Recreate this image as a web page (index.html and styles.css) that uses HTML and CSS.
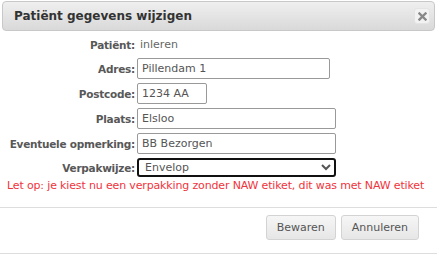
FILE: index.html
```html
<!DOCTYPE html>
<html>
<head>
    <title>Patiënt gegevens wijzigen</title>
    <meta charset="UTF-8">
    <link rel="stylesheet" href="styles.css">
</head>
<body>

    <div class="dialog">
        <div class="titlebar">
            <span class="title">Patiënt gegevens wijzigen</span>
            <button class="close" title="Sluiten">
                <svg width="9" height="9" viewBox="0 0 9 9"><path d="M1.5 1.5 L7.5 7.5 M7.5 1.5 L1.5 7.5" stroke="#888" stroke-width="2.4" stroke-linecap="square"/></svg>
            </button>
        </div>

        <div class="content">
            <div class="form">
                <label>Patiënt:</label>
                <span class="value">inleren</span>

                <label>Adres:</label>
                <input type="text" class="w-long" value="Pillendam 1">

                <label>Postcode:</label>
                <input type="text" class="w-short" value="1234 AA">

                <label>Plaats:</label>
                <input type="text" class="w-full" value="Elsloo">

                <label>Eventuele opmerking:</label>
                <input type="text" class="w-full" value="BB Bezorgen">

                <label>Verpakwijze:</label>
                <select class="w-full">
                    <option>Envelop</option>
                </select>
            </div>
            <p class="warning">Let op: je kiest nu een verpakking zonder NAW etiket, dit was met NAW etiket</p>
        </div>

        <div class="buttonpane">
            <button>Bewaren</button>
            <button>Annuleren</button>
        </div>
    </div>

</body>
</html>
```

FILE: styles.css
```css
body {
    margin: 0;
    background: #fff;
    font-family: "Century Gothic", "DejaVu Sans", sans-serif;
    font-size: 11px;
    color: #555;
}
.dialog {
    width: 437px;
    height: 254px;
    box-sizing: border-box;
    border-bottom: 1px solid #ddd;
    display: flex;
    flex-direction: column;
}
.titlebar {
    margin: 1px 2px 0 2px;
    height: 30px;
    box-sizing: border-box;
    border: 1px solid #c8c8c8;
    border-radius: 4px;
    background: linear-gradient(#efefef, #d9d9d9);
    display: flex;
    align-items: center;
    justify-content: space-between;
    padding: 0 4px 0 11px;
}
.title {
    font-weight: bold;
    font-size: 12px;
    color: #333;
}
.close {
    width: 16px;
    height: 16px;
    padding: 0;
    border: 1px solid #e4e4e4;
    border-radius: 3px;
    background: #f2f2f2;
    display: flex;
    align-items: center;
    justify-content: center;
}
.content {
    padding: 5px 0 0 0;
    flex: 1;
}
.form {
    display: grid;
    grid-template-columns: 135px auto;
    column-gap: 2px;
    row-gap: 4px;
    align-items: center;
    justify-items: start;
}
.form label {
    justify-self: end;
    white-space: nowrap;
    font-weight: bold;
    font-size: 10.5px;
    letter-spacing: -0.25px;
    color: #585858;
}
.value {
    height: 18px;
    line-height: 18px;
    padding-left: 3px;
    color: #666;
}
input, select {
    font-family: "DejaVu Sans", Verdana, sans-serif;
    font-size: 11px;
    color: #555;
    box-sizing: border-box;
    height: 21px;
    border: 1px solid #999;
    border-radius: 2px;
    padding: 0 4px;
    margin: 0;
    background: #fff;
}
.w-long { width: 193px; }
.w-short { width: 70px; }
.w-full { width: 199px; }
select {
    height: 19px;
    border: 2px solid #111;
    border-radius: 3px;
    padding: 0 2px;
}
.warning {
    margin: 2px 0 0 7px;
    color: #f0343c;
    font-size: 11px;
    letter-spacing: -0.15px;
    white-space: nowrap;
}
.buttonpane {
    border-top: 1px solid #ddd;
    height: 46px;
    box-sizing: border-box;
    display: flex;
    justify-content: flex-end;
    align-items: flex-start;
    gap: 5px;
    padding: 7px 18px 0 0;
}
.buttonpane button {
    font-family: "DejaVu Sans", Verdana, sans-serif;
    font-size: 11px;
    color: #555;
    height: 25px;
    padding: 0 10px;
    border: 1px solid #d3d3d3;
    border-radius: 3px;
    background: linear-gradient(#f6f6f6, #e6e6e6);
}
```
